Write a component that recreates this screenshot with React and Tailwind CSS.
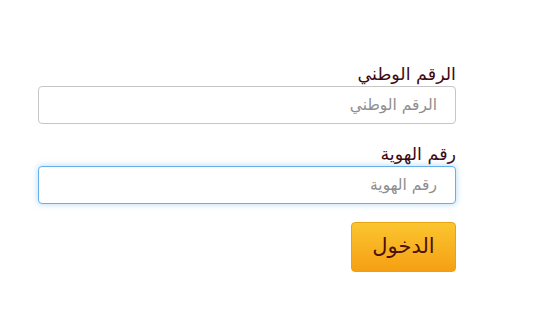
export default function App() {
  const font = { fontFamily: '"DejaVu Sans", "Noto Sans", sans-serif' };
  return (
    <div className="w-[550px] h-[335px] bg-white" style={font}>
      <div dir="rtl" className="ml-[38px] w-[418px] pt-[63px] flex flex-col">
        <label className="text-[17.5px] leading-[23px] text-[#3d0a14]">الرقم الوطني</label>
        <input
          type="text"
          placeholder="الرقم الوطني"
          className="h-[38px] w-full rounded-[4px] border border-[#c6c6c6] bg-white px-[18px] text-[15.5px] placeholder:text-[#8f8f8f] outline-none"
        />
        <label className="mt-[19px] text-[17.5px] leading-[23px] text-[#3d0a14]">رقم الهوية</label>
        <input
          type="text"
          placeholder="رقم الهوية"
          className="h-[38px] w-full rounded-[4px] border border-[#66afe9] bg-white px-[18px] text-[15.5px] placeholder:text-[#8f8f8f] outline-none shadow-[0_0_6px_rgba(102,175,233,0.5)]"
        />
        <div className="mt-[18px] flex">
          <button className="h-[50px] w-[105px] rounded-[4px] border border-[#e8a312] bg-gradient-to-b from-[#fbc52e] to-[#f5a012] text-[21px] text-[#4a1208]">
            الدخول
          </button>
        </div>
      </div>
    </div>
  );
}
